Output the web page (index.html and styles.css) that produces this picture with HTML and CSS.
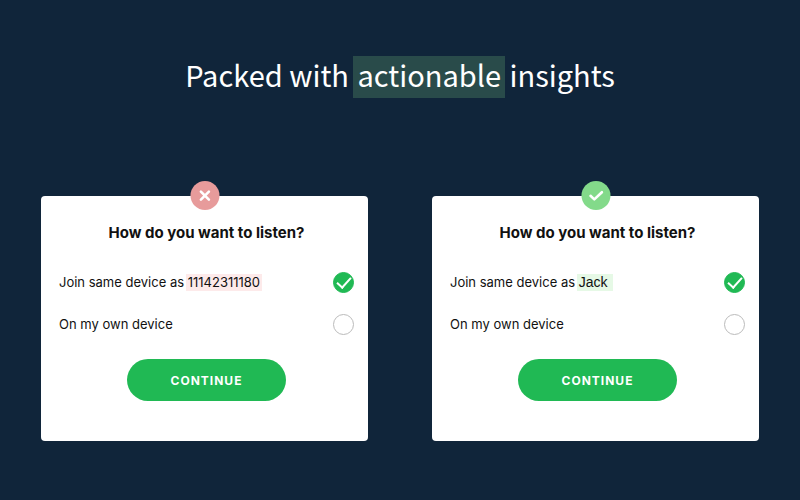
FILE: index.html
```html
<!DOCTYPE html>
<html lang="en">
<head>
    <meta charset="UTF-8">
    <meta name="viewport" content="width=device-width, initial-scale=1.0">
    <title>Packed with actionable insights</title>
    <link rel="stylesheet" href="styles.css">
</head>
<body>
    <h1>Packed with <span class="highlight">actionable</span> insights</h1>

    <div class="cards">
        <!-- Before -->
        <form class="card">
            <span class="badge badge-bad">
                <svg width="29" height="29" viewBox="0 0 29 29" fill="none" stroke="#fff" stroke-width="2.6" stroke-linecap="round"><path d="M10.4 10.6l8 8M18.4 10.6l-8 8"/></svg>
            </span>
            <h2>How do you want to listen?</h2>
            <div class="option">
                <label for="join-id">Join same device as <span class="name name-bad">11142311180</span></label>
                <input type="radio" id="join-id" name="listen" checked>
            </div>
            <div class="option">
                <label for="own-id">On my own device</label>
                <input type="radio" id="own-id" name="listen">
            </div>
            <button type="button">CONTINUE</button>
        </form>

        <!-- After -->
        <form class="card">
            <span class="badge badge-good">
                <svg width="29" height="29" viewBox="0 0 29 29" fill="none" stroke="#fff" stroke-width="2.6" stroke-linecap="round" stroke-linejoin="round"><path d="M9 14.8l3.8 3.6 7.6-7.2"/></svg>
            </span>
            <h2>How do you want to listen?</h2>
            <div class="option">
                <label for="join-name">Join same device as <span class="name name-good">Jack</span></label>
                <input type="radio" id="join-name" name="listen" checked>
            </div>
            <div class="option">
                <label for="own-name">On my own device</label>
                <input type="radio" id="own-name" name="listen">
            </div>
            <button type="button">CONTINUE</button>
        </form>
    </div>
</body>
</html>
```
FILE: styles.css
```css
* {
    box-sizing: border-box;
}
body {
    margin: 0;
    padding: 56px 41px;
    background-color: #10253a;
    color: #111;
    font-family: Inter, sans-serif;
}
h1 {
    margin: 0 0 98px;
    color: #fff;
    font-family: "Noto Sans CJK SC", sans-serif;
    font-size: 29px;
    font-weight: 400;
    line-height: 36px;
    text-align: center;
}
.highlight {
    display: inline-block;
    margin: 0 -2px;
    padding: 0 4px 6px;
    background-color: #294b4a;
}
.cards {
    display: grid;
    grid-template-columns: 1fr 1fr;
    gap: 64px;
}
.card {
    position: relative;
    padding: 26px 14px 40px 18px;
    background-color: #fff;
    border-radius: 4px;
}
.badge {
    position: absolute;
    top: -15px;
    left: 50%;
    width: 29px;
    height: 29px;
    border-radius: 50%;
    transform: translateX(-50%);
}
.badge svg {
    display: block;
}
.badge-bad {
    background-color: #e79b9b;
}
.badge-good {
    background-color: #83da8a;
}
h2 {
    margin: 0 0 28px;
    font-size: 15px;
    font-weight: 700;
    line-height: 22px;
    text-align: center;
}
.option {
    display: flex;
    align-items: center;
    justify-content: space-between;
    height: 21px;
    margin-bottom: 21px;
}
label {
    padding-bottom: 2px;
    font-size: 13px;
    line-height: 20px;
}
.name {
    display: inline-block;
    margin-left: -2px;
    padding: 0 2px;
    line-height: 17px;
}
.name-bad {
    background-color: #fdeaea;
}
.name-good {
    padding-right: 5px;
    background-color: #e6f9e6;
    font-family: "Liberation Sans", Arial, sans-serif;
    font-size: 14px;
}
input[type="radio"] {
    appearance: none;
    display: grid;
    place-items: center;
    width: 21px;
    height: 21px;
    margin: 0;
    border: 1px solid #bbb;
    border-radius: 50%;
}
input[type="radio"]:checked {
    border-color: #20b954;
    background-color: #20b954;
}
input[type="radio"]:checked::before {
    content: "";
    width: 6px;
    height: 12px;
    margin-bottom: 3px;
    border: solid #fff;
    border-width: 0 2px 2px 0;
    transform: rotate(42deg);
}
button {
    display: block;
    width: 159px;
    height: 42px;
    margin: 24px auto 0;
    border: none;
    border-radius: 21px;
    background-color: #20b954;
    color: #fff;
    font-family: Inter, sans-serif;
    font-size: 12px;
    font-weight: 700;
    letter-spacing: 1px;
    cursor: pointer;
}
```
